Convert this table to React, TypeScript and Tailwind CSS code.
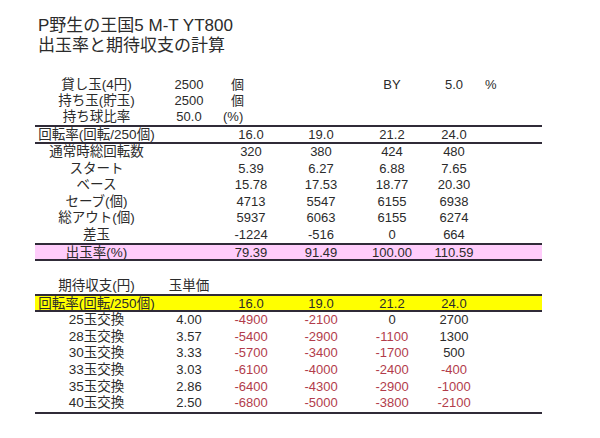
const cols =
  "grid grid-cols-[123px_62px_62px_78px_64px_60px_58px] items-center";

type Cell = { text?: string; red?: boolean; cls?: string };

const Row = ({
  label,
  cells,
  h = "h-[16.5px]",
  labelCls = "",
}: {
  label?: string;
  cells: (string | Cell)[];
  h?: string;
  labelCls?: string;
}) => {
  return (
    <div className={`${cols} ${h}`}>
      <div className={`text-center text-[13.5px] whitespace-nowrap ${labelCls}`}>
        {label}
      </div>
      {cells.map((c, i) => {
        const cell = typeof c === "string" ? { text: c } : c;
        return (
          <div
            key={i}
            className={`whitespace-nowrap ${cell.cls ?? "text-center"} ${
              cell.red ? "text-[#b23c4b]" : ""
            }`}
          >
            {cell.text}
          </div>
        );
      })}
    </div>
  );
};

const dataRows = [
  { label: "通常時総回転数", v: ["320", "380", "424", "480"] },
  { label: "スタート", v: ["5.39", "6.27", "6.88", "7.65"] },
  { label: "ベース", v: ["15.78", "17.53", "18.77", "20.30"] },
  { label: "セーブ(個)", v: ["4713", "5547", "6155", "6938"] },
  { label: "総アウト(個)", v: ["5937", "6063", "6155", "6274"] },
  { label: "差玉", v: ["-1224", "-516", "0", "664"] },
];

const exchangeRows = [
  { label: "25玉交換", price: "4.00", v: ["-4900", "-2100", "0", "2700"] },
  { label: "28玉交換", price: "3.57", v: ["-5400", "-2900", "-1100", "1300"] },
  { label: "30玉交換", price: "3.33", v: ["-5700", "-3400", "-1700", "500"] },
  { label: "33玉交換", price: "3.03", v: ["-6100", "-4000", "-2400", "-400"] },
  { label: "35玉交換", price: "2.86", v: ["-6400", "-4300", "-2900", "-1000"] },
  { label: "40玉交換", price: "2.50", v: ["-6800", "-5000", "-3800", "-2100"] },
];

const rates = ["16.0", "19.0", "21.2", "24.0"];

export default function App() {
  return (
    <div className="w-[600px] h-[438px] overflow-hidden bg-white text-[#2b2b2b] text-[13px] leading-[16px] font-['Liberation_Sans','Noto_Sans_CJK_JP',sans-serif]">
      <div className="pl-[38px] pt-[16px] text-[17px] leading-[20px]">
        <p>P野生の王国5 M-T YT800</p>
        <p>出玉率と期待収支の計算</p>
      </div>

      <div className="pl-[35px] mt-[21px] w-[542px]">
        <Row
          h="h-[16px]"
          label="貸し玉(4円)"
          cells={["2500", { text: "個", cls: "pl-[11px]" }, "", "BY", "5.0", { text: "%", cls: "pl-[1px]" }]}
        />
        <Row
          h="h-[16px]"
          label="持ち玉(貯玉)"
          cells={["2500", { text: "個", cls: "pl-[11px]" }]}
        />
        <Row
          h="h-[16px]"
          label="持ち球比率"
          cells={["50.0", { text: "(%)", cls: "pl-[3px]" }]}
        />

        <div className="border-y-2 border-[#302b38]">
          <Row h="h-[15px]" label="回転率(回転/250個)" cells={["", ...rates]} />
        </div>

        {dataRows.map((r) => (
          <Row key={r.label} label={r.label} cells={["", ...r.v]} />
        ))}

        <div className="border-y-2 border-[#302b38] bg-[#ffcdfb]">
          <Row
            h="h-[14px]"
            label="出玉率(%)"
            cells={["", "79.39", "91.49", "100.00", "110.59"]}
          />
        </div>

        <div className="mt-[17px]">
          <Row h="h-[16px]" label="期待収支(円)" cells={[{ text: "玉単価", cls: "text-center text-[13.5px]" }]} />
        </div>

        <div className="border-y-2 border-[#302b38] bg-[#ffff00]">
          <Row h="h-[14px]" label="回転率(回転/250個)" cells={["", ...rates]} />
        </div>

        <div className="border-b-2 border-[#302b38]">
          {exchangeRows.map((r) => (
            <Row
              key={r.label}
              h="h-[16.6px]"
              label={r.label}
              cells={[
                r.price,
                ...r.v.map((x) => ({ text: x, red: x.startsWith("-") })),
              ]}
            />
          ))}
        </div>
      </div>
    </div>
  );
}
